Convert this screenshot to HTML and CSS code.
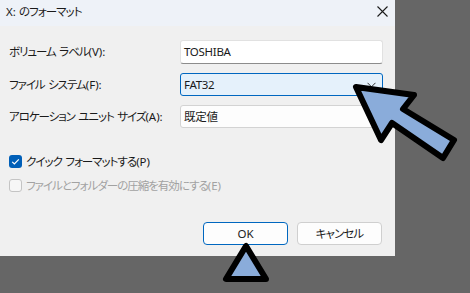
FILE: index.html
```html
<!DOCTYPE html>
<html lang="ja">
<head>
<meta charset="utf-8">
<title>X: のフォーマット</title>
<link rel="stylesheet" href="styles.css">
</head>
<body>
<div class="dialog">
  <div class="titlebar">
    <span class="title"><span class="en">X: </span>のフォーマット</span>
    <svg class="close" width="11" height="11" viewBox="0 0 11 11"><path d="M0.5 0.5 L10.5 10.5 M10.5 0.5 L0.5 10.5" stroke="#1b1b1b" stroke-width="1.1" fill="none"/></svg>
  </div>
  <div class="content">
    <div class="form">
      <label class="label">ボリューム ラベル<span class="en">(V):</span></label>
      <div class="field textbox">TOSHIBA</div>
      <label class="label">ファイル システム<span class="en">(F):</span></label>
      <div class="field combo focused">FAT32<svg class="chev" width="9" height="6" viewBox="0 0 9 6"><path d="M0.5 0.8 L4.5 4.8 L8.5 0.8" stroke="#333" fill="none"/></svg></div>
      <label class="label">アロケーション ユニット サイズ<span class="en">(A):</span></label>
      <div class="field combo">既定値<svg class="chev" width="9" height="6" viewBox="0 0 9 6"><path d="M0.5 0.8 L4.5 4.8 L8.5 0.8" stroke="#333" fill="none"/></svg></div>
    </div>
    <div class="checks">
      <div class="check">
        <span class="box checked"><svg width="13" height="13" viewBox="0 0 13 13"><path d="M3.2 6.8 L5.4 9 L9.8 4.4" stroke="#fff" stroke-width="1.2" fill="none"/></svg></span>
        <span>クイック フォーマットする<span class="en">(P)</span></span>
      </div>
      <div class="check disabled">
        <span class="box"></span>
        <span>ファイルとフォルダーの圧縮を有効にする<span class="en">(E)</span></span>
      </div>
    </div>
    <div class="buttons">
      <button class="btn primary">OK</button>
      <button class="btn jp">キャンセル</button>
    </div>
  </div>
</div>
<svg class="overlay" width="470" height="293" viewBox="0 0 470 293">
  <polygon points="356,87 414,95 403,109 454,140 443,158 392,123 381,140" fill="#8aacda" stroke="#000" stroke-width="6" stroke-linejoin="round"/>
  <polygon points="246,246 226,279 266,279" fill="#8aacda" stroke="#000" stroke-width="6" stroke-linejoin="round"/>
</svg>
</body>
</html>
```
FILE: styles.css
```css
html, body {
  margin: 0;
  padding: 0;
}
body {
  width: 470px;
  height: 293px;
  background: #666666;
  font-family: "Noto Sans", "Noto Sans CJK JP", sans-serif;
  font-size: 11.5px;
  color: #1a1a1a;
  font-feature-settings: "palt";
  position: relative;
  overflow: hidden;
}
.en {
  letter-spacing: 0;
  word-spacing: 0;
}
.dialog {
  width: 395px;
  height: 256px;
  background: #f0f0f0;
  display: flex;
  flex-direction: column;
}
.titlebar {
  height: 26px;
  background: #eef2f8;
  display: flex;
  align-items: center;
  justify-content: space-between;
  padding: 0 7px 0 6px;
}
.title {
  line-height: 1;
  margin-top: -2px;
  white-space: nowrap;
  letter-spacing: -0.9px;
}
.close {
  margin-top: -4px;
}
.content {
  padding: 14px 12px 0 9px;
  display: flex;
  flex-direction: column;
}
.form {
  display: grid;
  grid-template-columns: 171px 203px;
  row-gap: 9px;
  align-items: center;
}
.label {
  line-height: 1;
  white-space: nowrap;
  letter-spacing: -1.05px;
  word-spacing: 1.5px;
}
.field {
  height: 23px;
  box-sizing: border-box;
  border: 1px solid #e1e1e1;
  border-radius: 3px;
  background: #fdfdfd;
  padding: 0 6px 0 3px;
  display: flex;
  align-items: center;
  justify-content: space-between;
  line-height: 1;
  letter-spacing: -0.3px;
}
.textbox {
  height: 24px;
  background: #ffffff;
  border-bottom: 1px solid #8c8c8c;
}
.combo {
  border-color: #d3d3d3;
}
.focused {
  background: #e5f1fb;
  border-color: #0067c0;
}
.chev {
  flex: none;
}
.checks {
  margin-top: 27px;
  display: flex;
  flex-direction: column;
  gap: 11px;
}
.check {
  display: flex;
  align-items: center;
  gap: 4px;
  line-height: 1;
  height: 13px;
  white-space: nowrap;
  letter-spacing: -1px;
  word-spacing: 1.5px;
}
.check.disabled {
  color: #a2a2a2;
}
.box {
  width: 13px;
  height: 13px;
  box-sizing: border-box;
  border: 1px solid #c4c4c4;
  border-radius: 3px;
  background: #f6f6f6;
  display: flex;
  flex: none;
}
.box.checked {
  border: none;
  background: #005fb8;
}
.buttons {
  margin-top: 30px;
  display: flex;
  justify-content: flex-end;
  gap: 9px;
  padding-right: 1px;
}
.btn {
  width: 85px;
  height: 23px;
  box-sizing: border-box;
  border: 1px solid #cfcfcf;
  border-radius: 4px;
  background: #fdfdfd;
  font-family: inherit;
  font-size: 11.5px;
  font-feature-settings: "palt";
  color: #1a1a1a;
  padding: 0;
  line-height: 1;
}
.btn.jp {
  letter-spacing: -0.9px;
}
.btn.primary {
  border-color: #0067c0;
}
.overlay {
  position: absolute;
  left: 0;
  top: 0;
  pointer-events: none;
}
```
